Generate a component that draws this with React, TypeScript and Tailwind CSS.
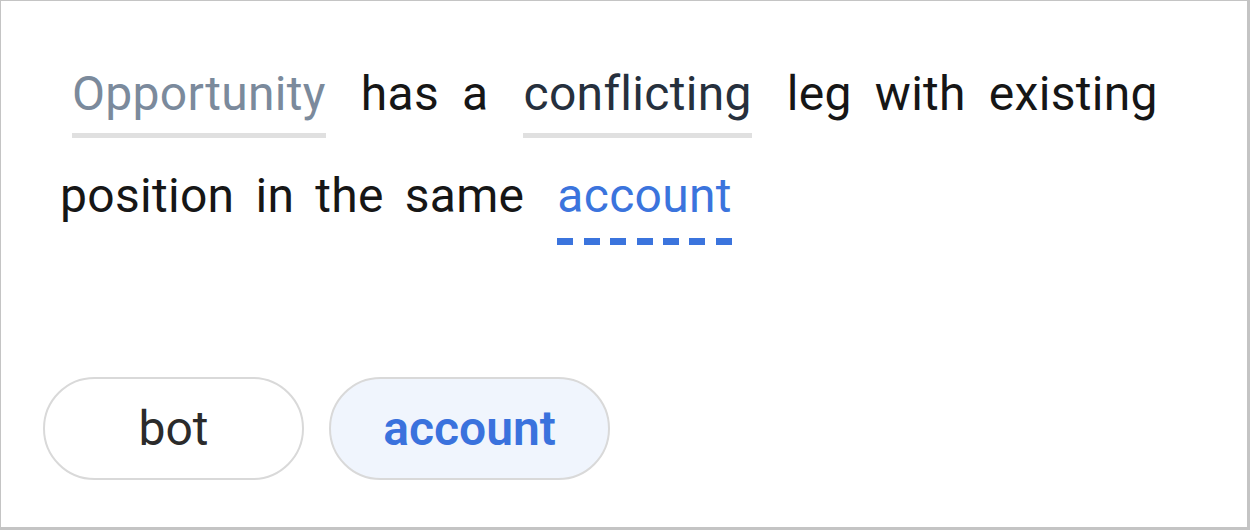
import React from "react";

const font = { fontFamily: "Roboto, 'Open Sans', sans-serif" };

function Word({ children }: { children: React.ReactNode }) {
  return <span className="block leading-[68px] text-[#161616]">{children}</span>;
}

function Chip({ children, muted }: { children: React.ReactNode; muted?: boolean }) {
  return (
    <span
      className={`mx-[12px] block border-b-[5px] border-[#e0e0e0] pb-[5px] leading-[68px] ${
        muted ? "text-[#7b8a9c]" : "text-[#26303d]"
      }`}
    >
      {children}
    </span>
  );
}

function DashedWord({ children }: { children: React.ReactNode }) {
  return (
    <span className="mx-[12px] flex flex-col">
      <span className="block leading-[68px] text-[#3b74dd]">{children}</span>
      {/* dashed underline */}
      <span className="mt-[8px] flex justify-between">
        {Array.from({ length: 7 }).map((_, i) => (
          <span key={i} className="h-[7px] w-[16px] bg-[#3b74dd]" />
        ))}
      </span>
    </span>
  );
}

export default function App() {
  return (
    <div
      style={font}
      className="box-border flex h-[530px] w-[1250px] flex-col border border-r-[3px] border-b-[3px] border-[#c4c4c4] bg-white"
    >
      {/* Sentence */}
      <div className="flex flex-col gap-[24px] pl-[59px] pt-[59px] text-[48px] tracking-[0.3px]">
        <div className="flex items-start gap-x-[23px]">
          <Chip muted>Opportunity</Chip>
          <Word>has</Word>
          <Word>a</Word>
          <Chip>conflicting</Chip>
          <Word>leg</Word>
          <Word>with</Word>
          <Word>existing</Word>
        </div>
        <div className="flex items-start gap-x-[21px]">
          <Word>position</Word>
          <Word>in</Word>
          <Word>the</Word>
          <Word>same</Word>
          <DashedWord>account</DashedWord>
        </div>
      </div>

      {/* Options */}
      <div className="mt-auto mb-[47px] flex gap-[25px] pl-[42px]">
        <button className="flex h-[103px] w-[261px] items-center justify-center rounded-full border-2 border-[#d9d9d9] bg-white text-[48px] text-[#2b2b2b]">
          bot
        </button>
        <button className="flex h-[103px] w-[281px] items-center justify-center rounded-full border-2 border-[#d9d9d9] bg-[#f0f5fd] text-[48px] font-semibold text-[#3a72dd]">
          account
        </button>
      </div>
    </div>
  );
}
